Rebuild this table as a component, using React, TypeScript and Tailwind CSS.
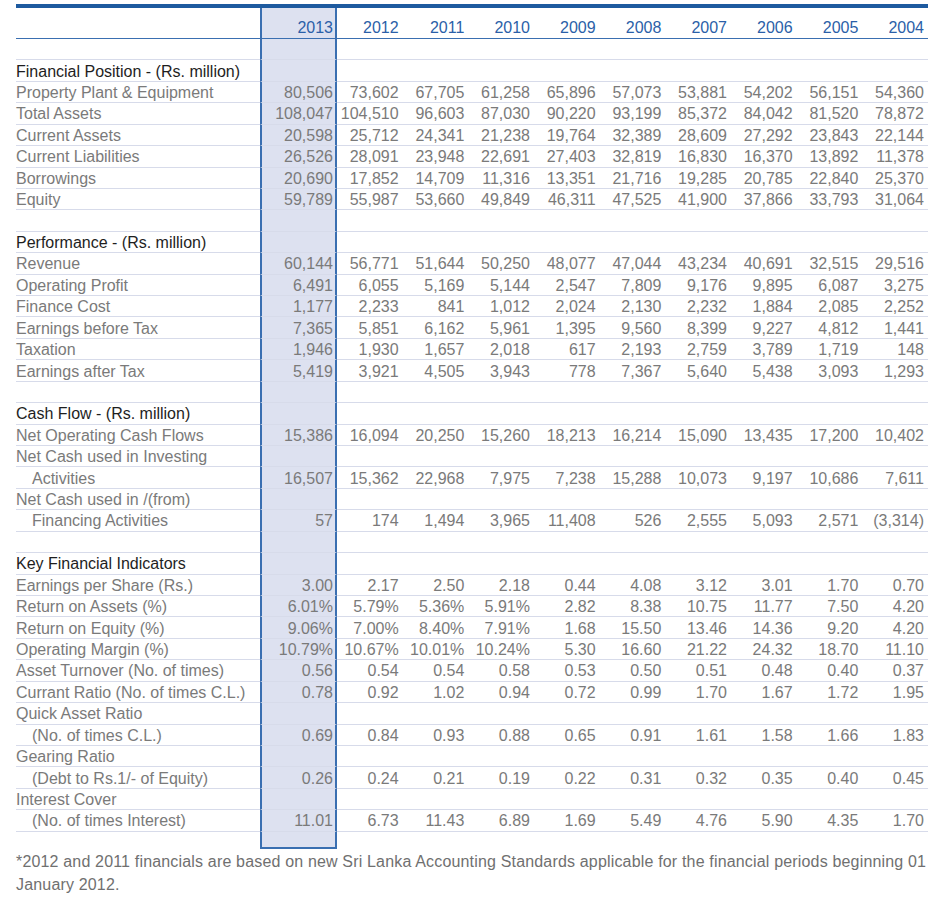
const years = ["2013", "2012", "2011", "2010", "2009", "2008", "2007", "2006", "2005", "2004"];

type Row =
  | { kind: "blank" }
  | { kind: "section"; label: string }
  | { kind: "data"; label: string; indent?: boolean; values?: string[] };

const rows: Row[] = [
  { kind: "blank" },
  { kind: "section", label: "Financial Position - (Rs. million)" },
  { kind: "data", label: "Property Plant & Equipment", values: ["80,506", "73,602", "67,705", "61,258", "65,896", "57,073", "53,881", "54,202", "56,151", "54,360"] },
  { kind: "data", label: "Total Assets", values: ["108,047", "104,510", "96,603", "87,030", "90,220", "93,199", "85,372", "84,042", "81,520", "78,872"] },
  { kind: "data", label: "Current Assets", values: ["20,598", "25,712", "24,341", "21,238", "19,764", "32,389", "28,609", "27,292", "23,843", "22,144"] },
  { kind: "data", label: "Current Liabilities", values: ["26,526", "28,091", "23,948", "22,691", "27,403", "32,819", "16,830", "16,370", "13,892", "11,378"] },
  { kind: "data", label: "Borrowings", values: ["20,690", "17,852", "14,709", "11,316", "13,351", "21,716", "19,285", "20,785", "22,840", "25,370"] },
  { kind: "data", label: "Equity", values: ["59,789", "55,987", "53,660", "49,849", "46,311", "47,525", "41,900", "37,866", "33,793", "31,064"] },
  { kind: "blank" },
  { kind: "section", label: "Performance - (Rs. million)" },
  { kind: "data", label: "Revenue", values: ["60,144", "56,771", "51,644", "50,250", "48,077", "47,044", "43,234", "40,691", "32,515", "29,516"] },
  { kind: "data", label: "Operating Profit", values: ["6,491", "6,055", "5,169", "5,144", "2,547", "7,809", "9,176", "9,895", "6,087", "3,275"] },
  { kind: "data", label: "Finance Cost", values: ["1,177", "2,233", "841", "1,012", "2,024", "2,130", "2,232", "1,884", "2,085", "2,252"] },
  { kind: "data", label: "Earnings before Tax", values: ["7,365", "5,851", "6,162", "5,961", "1,395", "9,560", "8,399", "9,227", "4,812", "1,441"] },
  { kind: "data", label: "Taxation", values: ["1,946", "1,930", "1,657", "2,018", "617", "2,193", "2,759", "3,789", "1,719", "148"] },
  { kind: "data", label: "Earnings after Tax", values: ["5,419", "3,921", "4,505", "3,943", "778", "7,367", "5,640", "5,438", "3,093", "1,293"] },
  { kind: "blank" },
  { kind: "section", label: "Cash Flow - (Rs. million)" },
  { kind: "data", label: "Net Operating Cash Flows", values: ["15,386", "16,094", "20,250", "15,260", "18,213", "16,214", "15,090", "13,435", "17,200", "10,402"] },
  { kind: "data", label: "Net Cash used in Investing" },
  { kind: "data", label: "Activities", indent: true, values: ["16,507", "15,362", "22,968", "7,975", "7,238", "15,288", "10,073", "9,197", "10,686", "7,611"] },
  { kind: "data", label: "Net Cash used in /(from)" },
  { kind: "data", label: "Financing Activities", indent: true, values: ["57", "174", "1,494", "3,965", "11,408", "526", "2,555", "5,093", "2,571", "(3,314)"] },
  { kind: "blank" },
  { kind: "section", label: "Key Financial Indicators" },
  { kind: "data", label: "Earnings per Share (Rs.)", values: ["3.00", "2.17", "2.50", "2.18", "0.44", "4.08", "3.12", "3.01", "1.70", "0.70"] },
  { kind: "data", label: "Return on Assets (%)", values: ["6.01%", "5.79%", "5.36%", "5.91%", "2.82", "8.38", "10.75", "11.77", "7.50", "4.20"] },
  { kind: "data", label: "Return on Equity (%)", values: ["9.06%", "7.00%", "8.40%", "7.91%", "1.68", "15.50", "13.46", "14.36", "9.20", "4.20"] },
  { kind: "data", label: "Operating Margin (%)", values: ["10.79%", "10.67%", "10.01%", "10.24%", "5.30", "16.60", "21.22", "24.32", "18.70", "11.10"] },
  { kind: "data", label: "Asset Turnover (No. of times)", values: ["0.56", "0.54", "0.54", "0.58", "0.53", "0.50", "0.51", "0.48", "0.40", "0.37"] },
  { kind: "data", label: "Currant Ratio (No. of times C.L.)", values: ["0.78", "0.92", "1.02", "0.94", "0.72", "0.99", "1.70", "1.67", "1.72", "1.95"] },
  { kind: "data", label: "Quick Asset Ratio" },
  { kind: "data", label: "(No. of times C.L.)", indent: true, values: ["0.69", "0.84", "0.93", "0.88", "0.65", "0.91", "1.61", "1.58", "1.66", "1.83"] },
  { kind: "data", label: "Gearing Ratio" },
  { kind: "data", label: "(Debt to Rs.1/- of Equity)", indent: true, values: ["0.26", "0.24", "0.21", "0.19", "0.22", "0.31", "0.32", "0.35", "0.40", "0.45"] },
  { kind: "data", label: "Interest Cover" },
  { kind: "data", label: "(No. of times Interest)", indent: true, values: ["11.01", "6.73", "11.43", "6.89", "1.69", "5.49", "4.76", "5.90", "4.35", "1.70"] },
];

const line = "border-b border-b-[#d7dbea]";
const hl = "bg-[#dde1f0] border-x-2 border-x-[#3a6fb1]";

export default function App() {
  return (
    <div className="bg-white min-h-[919px] pl-[16px] pt-[4px] font-['Liberation_Sans',Arial,sans-serif] text-[16px]">
      <div className="w-[912px]">
        <div className="h-[4px] bg-[#1d5a9f]" />
        <div className="grid grid-cols-[244px_77px_repeat(9,minmax(0,1fr))] grid-rows-[31px_repeat(37,21.43px)_17px]">
          {/* header */}
          <div className="border-b border-b-[#3a6fb1]" />
          {years.map((y, i) => (
            <div
              key={y}
              className={`flex items-end justify-end pb-[2px] leading-none text-[#2b5fa8] border-b border-b-[#3a6fb1] ${
                i === 0 ? `${hl} pr-[2px]` : "pr-[4px]"
              }`}
            >
              {y}
            </div>
          ))}

          {rows.map((row, r) => (
            <Line key={r} row={row} />
          ))}

          {/* bottom of highlighted column */}
          <div />
          <div className={`${hl} border-b-2 border-b-[#3a6fb1]`} />
          <div className="col-span-9" />
        </div>
        <p className="text-[#707070] leading-[23px] pt-[1px] tracking-[0.17px]">
          *2012 and 2011 financials are based on new Sri Lanka Accounting Standards applicable for the financial periods beginning 01 January 2012.
        </p>
      </div>
    </div>
  );
}

function Line({ row }: { row: Row }) {
  const label =
    row.kind === "section" ? (
      <span className="text-[#1e1e1e]">{row.label}</span>
    ) : row.kind === "data" ? (
      <span className={`text-[#7a7a7a] ${row.indent ? "pl-[16px]" : ""}`}>{row.label}</span>
    ) : null;
  const values = row.kind === "data" && row.values ? row.values : null;

  return (
    <>
      <div className={`flex items-center pt-[2px] whitespace-nowrap leading-none ${line}`}>{label}</div>
      {years.map((y, i) => (
        <div
          key={y}
          className={`flex items-center justify-end pt-[2px] whitespace-nowrap leading-none text-[#7a7a7a] ${line} ${
            i === 0 ? `${hl} pr-[2px]` : "pr-[4px]"
          }`}
        >
          {values ? values[i] : ""}
        </div>
      ))}
    </>
  );
}
